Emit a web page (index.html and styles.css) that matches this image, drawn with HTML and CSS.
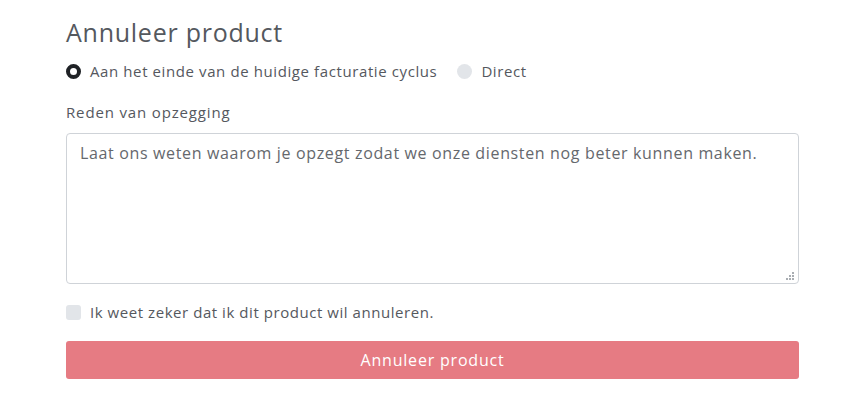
FILE: index.html
```html
<!DOCTYPE html>
<html lang="nl">
<head>
<meta charset="utf-8">
<title>Annuleer product</title>
<link rel="stylesheet" href="styles.css">
</head>
<body>
<main class="panel">
  <h2 class="title">Annuleer product</h2>
  <div class="radios">
    <label class="radio"><span class="dot dot-on"></span><span>Aan het einde van de huidige facturatie cyclus</span></label>
    <label class="radio"><span class="dot"></span><span>Direct</span></label>
  </div>
  <label class="field-label">Reden van opzegging</label>
  <div class="textarea-wrap">
    <textarea class="textarea" placeholder="Laat ons weten waarom je opzegt zodat we onze diensten nog beter kunnen maken."></textarea>
    <svg class="grip" width="9" height="9" viewBox="0 0 9 9" aria-hidden="true">
      <rect x="6" y="0" width="2" height="2" fill="#a9adb2"/>
      <rect x="3" y="3" width="2" height="2" fill="#a9adb2"/>
      <rect x="6" y="3" width="2" height="2" fill="#a9adb2"/>
      <rect x="0" y="6" width="2" height="2" fill="#a9adb2"/>
      <rect x="3" y="6" width="2" height="2" fill="#a9adb2"/>
      <rect x="6" y="6" width="2" height="2" fill="#a9adb2"/>
    </svg>
  </div>
  <label class="check"><span class="box"></span><span>Ik weet zeker dat ik dit product wil annuleren.</span></label>
  <button class="btn">Annuleer product</button>
</main>
</body>
</html>
```
FILE: styles.css
```css
* { box-sizing: border-box; }
html, body { margin: 0; background: #fff; }
body {
  font-family: "Open Sans", "DejaVu Sans", sans-serif;
  color: #55585e;
}
.panel {
  width: 733px;
  margin-left: 66px;
  padding-top: 16px;
  display: flex;
  flex-direction: column;
}
.title {
  margin: 0;
  font-size: 25px;
  font-weight: 400;
  line-height: 32px;
  color: #54585e;
  letter-spacing: 0.75px;
}
.radios {
  display: flex;
  gap: 20px;
  margin-top: 9px;
  height: 28px;
  align-items: center;
}
.radio {
  display: flex;
  align-items: center;
  gap: 9px;
  font-size: 15px;
  letter-spacing: 0.6px;
}
.dot {
  width: 15px;
  height: 15px;
  border-radius: 50%;
  background: #e2e5e9;
  flex: none;
}
.dot-on {
  background: #fff;
  border: 4.5px solid #1f2226;
}
.field-label {
  margin-top: 17px;
  font-size: 15px;
  line-height: 20px;
  letter-spacing: 0.85px;
}
.textarea-wrap {
  margin-top: 11px;
  position: relative;
}
.textarea {
  display: block;
  width: 733px;
  height: 151px;
  border: 1px solid #cfd3d8;
  border-radius: 4px;
  padding: 8px 13px;
  font-family: inherit;
  font-size: 16px;
  line-height: 22px;
  letter-spacing: 0.65px;
  resize: none;
  outline: none;
}
.textarea::placeholder { color: #65686d; opacity: 1; }
.grip {
  position: absolute;
  right: 4px;
  bottom: 3px;
}
.check {
  display: flex;
  align-items: center;
  gap: 9px;
  margin-top: 18px;
  font-size: 15px;
  letter-spacing: 0.55px;
  height: 20px;
}
.box {
  width: 15px;
  height: 15px;
  border-radius: 3px;
  background: #e2e5e9;
  flex: none;
}
.btn {
  margin-top: 19px;
  height: 38px;
  width: 733px;
  border: none;
  border-radius: 3px;
  background: #e67b83;
  color: #fff;
  font-family: inherit;
  font-size: 16px;
  letter-spacing: 0.8px;
}
```
